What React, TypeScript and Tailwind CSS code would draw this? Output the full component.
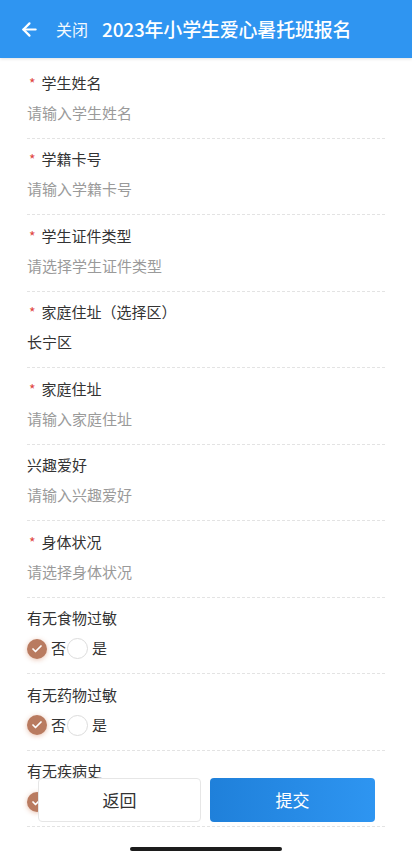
import { ArrowLeft, Check } from 'lucide-react';

interface Field {
  label: string;
  required?: boolean;
  value?: string;
  placeholder?: string;
  radio?: boolean;
}

const fields: Field[] = [
  { label: '学生姓名', required: true, placeholder: '请输入学生姓名' },
  { label: '学籍卡号', required: true, placeholder: '请输入学籍卡号' },
  { label: '学生证件类型', required: true, placeholder: '请选择学生证件类型' },
  { label: '家庭住址（选择区）', required: true, value: '长宁区' },
  { label: '家庭住址', required: true, placeholder: '请输入家庭住址' },
  { label: '兴趣爱好', placeholder: '请输入兴趣爱好' },
  { label: '身体状况', required: true, placeholder: '请选择身体状况' },
  { label: '有无食物过敏', radio: true },
  { label: '有无药物过敏', radio: true },
  { label: '有无疾病史', radio: true },
];

function RadioGroup() {
  return (
    <div className="flex items-center h-[22px] text-[15px] text-[#333]">
      <span className="w-[20px] h-[20px] rounded-full bg-[#b97b60] flex items-center justify-center shadow-[0_1px_5px_rgba(205,120,80,0.45)]">
        <Check className="w-3 h-3 text-white" strokeWidth={3.5} />
      </span>
      <span className="ml-[4px]">否</span>
      <span className="ml-[1px] w-[21px] h-[21px] rounded-full border border-[#dcdcdc] bg-white" />
      <span className="ml-[4px]">是</span>
    </div>
  );
}

export default function App() {
  return (
    <div
      className="min-h-[858px] bg-white"
      style={{ fontFamily: '"Noto Sans CJK SC", "Noto Sans", sans-serif' }}
    >
      <header className="h-[58px] bg-[#2f95f1] flex items-center text-white shadow-[0_1px_3px_rgba(0,0,0,0.12)]">
        <ArrowLeft className="ml-[19px] w-[21px] h-[21px]" strokeWidth={2.5} />
        <span className="ml-[16px] text-[16px] opacity-95">关闭</span>
        <span className="ml-[14px] text-[19px] font-medium tracking-[-0.2px]">
          2023年小学生爱心暑托班报名
        </span>
      </header>

      <div className="pt-[4px] px-[27px]">
        {fields.map((f) => (
          <div
            key={f.label}
            className="pt-[10px] pb-[13.5px] border-b border-dashed border-[#e3e3e3]"
          >
            <div className="h-[22px] flex items-center text-[15px] text-[#333]">
              {f.required && (
                <span className="text-[#e0463f] mr-[6px] ml-[2px] text-[14px]">*</span>
              )}
              {f.label}
            </div>
            <div className="mt-[8px]">
              {f.radio ? (
                <RadioGroup />
              ) : (
                <div
                  className={`h-[22px] flex items-center text-[15px] ${
                    f.value ? 'text-[#333]' : 'text-[#9a9a9a]'
                  }`}
                >
                  {f.value ?? f.placeholder}
                </div>
              )}
            </div>
          </div>
        ))}
      </div>

      <div className="fixed left-0 right-0 bottom-[36px] flex gap-[9px] pl-[38px] pr-[37px]">
        <button className="w-[163px] h-[44px] rounded-[4px] bg-white border border-[#e6e6e6] text-[17px] text-[#333]">
          返回
        </button>
        <button className="flex-1 h-[44px] rounded-[4px] bg-gradient-to-r from-[#1f80da] to-[#2e95f1] text-[17px] text-white">
          提交
        </button>
      </div>

      <div className="fixed left-0 right-0 bottom-[7px] flex justify-center">
        <div className="w-[152px] h-[4px] rounded-full bg-[#1c1c1c]" />
      </div>
    </div>
  );
}
